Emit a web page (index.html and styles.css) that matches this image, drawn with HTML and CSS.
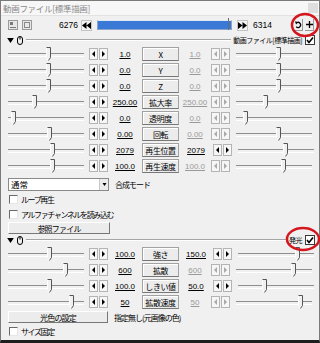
FILE: index.html
```html
<!DOCTYPE html>
<html lang="ja">
  <head>
    <meta charset="UTF-8" />
    <title>動画ファイル[標準描画]</title>
    <link rel="stylesheet" href="styles.css">
  </head>
  <body>
    <svg width="0" height="0" style="position:absolute">
      <symbol id="thumb" viewBox="0 0 5 14">
        <path d="M0.5 13V0.5H4.5V10.5L2.5 13.5Z" fill="#f0f0f0" />
        <path d="M0.5 0.5V10.5L2.5 13.5" fill="none" stroke="#ffffff" />
        <path d="M0.5 0.5H4.5V10.5L2.5 13.5" fill="none" stroke="#555555" />
      </symbol>
      <symbol id="mouse" viewBox="0 0 6 9">
        <rect x="0.5" y="0.5" width="5" height="8" rx="2.5" fill="none" stroke="#000" />
        <path d="M3 0.5V3.5" stroke="#000" />
      </symbol>
      <symbol id="tri" viewBox="0 0 8 6">
        <path d="M0 0H8L4 6Z" fill="#000" />
      </symbol>
      <symbol id="check" viewBox="0 0 8 8">
        <path d="M1 4L3 6.5L7 1.5" fill="none" stroke="#000" stroke-width="1.6" />
      </symbol>
    </svg>

    <div class="win">
      <div class="title">
        <span>動画ファイル[標準描画]</span>
        <span class="close"></span>
      </div>

      <div class="toolbar">
        <span class="tb-icon">
          <svg width="10" height="10" viewBox="0 0 10 10">
            <rect x="0.5" y="0.5" width="9" height="9" fill="#e8e8e8" stroke="#9a9a9a" />
            <rect x="2" y="2" width="3" height="3" fill="#7a7a7a" />
            <path d="M2 7.5H8" stroke="#7a7a7a" />
          </svg>
        </span>
        <span class="tb-icon">
          <svg width="10" height="10" viewBox="0 0 10 10">
            <rect x="0.5" y="0.5" width="9" height="9" fill="#e8e8e8" stroke="#9a9a9a" />
            <rect x="2.5" y="2.5" width="5" height="5" fill="none" stroke="#8a8a8a" />
          </svg>
        </span>
        <span class="frame-l">6276</span>
        <span class="seek">
          <svg width="9" height="7" viewBox="0 0 9 7"><path d="M4.5 0V7L0 3.5Z M9 0V7L4.5 3.5Z" fill="#000" /></svg>
        </span>
        <div class="timeline"><span class="marker"></span></div>
        <span class="seek">
          <svg width="9" height="7" viewBox="0 0 9 7"><path d="M0 0V7L4.5 3.5Z M4.5 0V7L9 3.5Z" fill="#000" /></svg>
        </span>
        <span class="frame-r">6314</span>
        <span class="tb-btn">
          <svg width="7" height="8" viewBox="0 0 7 8">
            <path d="M2 1.5A2.6 2.6 0 1 1 1.2 5.8" fill="none" stroke="#000" stroke-width="1.3" />
            <path d="M0 0.3L3.3 1.2L1 3.6Z" fill="#000" />
          </svg>
        </span>
        <span class="tb-btn">
          <svg width="7" height="7" viewBox="0 0 7 7"><path d="M3.5 0V7M0 3.5H7" stroke="#000" stroke-width="1.3" /></svg>
        </span>
      </div>

      <div class="hdr">
        <svg class="tri" width="7" height="5"><use href="#tri" /></svg>
        <svg class="mouse" width="6" height="9"><use href="#mouse" /></svg>
        <span class="hdr-line"></span>
        <span class="hdr-label">動画ファイル[標準描画]</span>
        <span class="cbox checked"><svg width="8" height="8"><use href="#check" /></svg></span>
      </div>

      <div class="row">
        <div class="slider"><svg class="thumb" style="left:38px"><use href="#thumb" /></svg></div>
        <div class="arrows"><b class="al"></b><b class="ar"></b></div>
        <span class="val">1.0</span>
        <span class="name">X</span>
        <span class="val off">1.0</span>
        <div class="arrows off"><b class="al"></b><b class="ar"></b></div>
        <div class="slider right"><svg class="thumb" style="left:40px"><use href="#thumb" /></svg></div>
      </div>
      <div class="row">
        <div class="slider"><svg class="thumb" style="left:38px"><use href="#thumb" /></svg></div>
        <div class="arrows"><b class="al"></b><b class="ar"></b></div>
        <span class="val">0.0</span>
        <span class="name">Y</span>
        <span class="val off">0.0</span>
        <div class="arrows off"><b class="al"></b><b class="ar"></b></div>
        <div class="slider right"><svg class="thumb" style="left:40px"><use href="#thumb" /></svg></div>
      </div>
      <div class="row">
        <div class="slider"><svg class="thumb" style="left:38px"><use href="#thumb" /></svg></div>
        <div class="arrows"><b class="al"></b><b class="ar"></b></div>
        <span class="val">0.0</span>
        <span class="name">Z</span>
        <span class="val off">0.0</span>
        <div class="arrows off"><b class="al"></b><b class="ar"></b></div>
        <div class="slider right"><svg class="thumb" style="left:40px"><use href="#thumb" /></svg></div>
      </div>
      <div class="row">
        <div class="slider"><svg class="thumb" style="left:24px"><use href="#thumb" /></svg></div>
        <div class="arrows"><b class="al"></b><b class="ar"></b></div>
        <span class="val">250.00</span>
        <span class="name">拡大率</span>
        <span class="val off">250.00</span>
        <div class="arrows off"><b class="al"></b><b class="ar"></b></div>
        <div class="slider right"><svg class="thumb" style="left:27px"><use href="#thumb" /></svg></div>
      </div>
      <div class="row">
        <div class="slider"><svg class="thumb" style="left:3px"><use href="#thumb" /></svg></div>
        <div class="arrows"><b class="al"></b><b class="ar"></b></div>
        <span class="val">0.0</span>
        <span class="name">透明度</span>
        <span class="val off">0.0</span>
        <div class="arrows off"><b class="al"></b><b class="ar"></b></div>
        <div class="slider right"><svg class="thumb" style="left:7px"><use href="#thumb" /></svg></div>
      </div>
      <div class="row">
        <div class="slider"><svg class="thumb" style="left:39px"><use href="#thumb" /></svg></div>
        <div class="arrows"><b class="al"></b><b class="ar"></b></div>
        <span class="val">0.00</span>
        <span class="name">回転</span>
        <span class="val off">0.00</span>
        <div class="arrows off"><b class="al"></b><b class="ar"></b></div>
        <div class="slider right"><svg class="thumb" style="left:40px"><use href="#thumb" /></svg></div>
      </div>
      <div class="row">
        <div class="slider"><svg class="thumb" style="left:42px"><use href="#thumb" /></svg></div>
        <div class="arrows"><b class="al"></b><b class="ar"></b></div>
        <span class="val">2079</span>
        <span class="name">再生位置</span>
        <span class="val">2079</span>
        <div class="arrows"><b class="al"></b><b class="ar"></b></div>
        <div class="slider right"><svg class="thumb" style="left:45px"><use href="#thumb" /></svg></div>
      </div>
      <div class="row">
        <div class="slider"><svg class="thumb" style="left:42px"><use href="#thumb" /></svg></div>
        <div class="arrows"><b class="al"></b><b class="ar"></b></div>
        <span class="val">100.0</span>
        <span class="name">再生速度</span>
        <span class="val off">100.0</span>
        <div class="arrows off"><b class="al"></b><b class="ar"></b></div>
        <div class="slider right"><svg class="thumb" style="left:45px"><use href="#thumb" /></svg></div>
      </div>

      <div class="select-row">
        <div class="select">
          <span>通常</span>
          <span class="drop"><svg width="5" height="3"><use href="#tri" /></svg></span>
        </div>
        <span class="note">合成モード</span>
      </div>

      <label class="check-row"><span class="cbox"></span>ループ再生</label>
      <label class="check-row"><span class="cbox"></span>アルファチャンネルを読み込む</label>

      <div class="btn-row">
        <span class="wide-btn ref">参照ファイル</span>
      </div>

      <div class="hdr">
        <svg class="tri" width="7" height="5"><use href="#tri" /></svg>
        <svg class="mouse" width="6" height="9"><use href="#mouse" /></svg>
        <span class="hdr-line"></span>
        <span class="hdr-label">発光</span>
        <span class="cbox checked"><svg width="8" height="8"><use href="#check" /></svg></span>
      </div>

      <div class="row">
        <div class="slider"><svg class="thumb" style="left:39px"><use href="#thumb" /></svg></div>
        <div class="arrows"><b class="al"></b><b class="ar"></b></div>
        <span class="val">100.0</span>
        <span class="name">強さ</span>
        <span class="val">150.0</span>
        <div class="arrows"><b class="al"></b><b class="ar"></b></div>
        <div class="slider right"><svg class="thumb" style="left:57px"><use href="#thumb" /></svg></div>
      </div>
      <div class="row">
        <div class="slider"><svg class="thumb" style="left:55px"><use href="#thumb" /></svg></div>
        <div class="arrows"><b class="al"></b><b class="ar"></b></div>
        <span class="val">600</span>
        <span class="name">拡散</span>
        <span class="val off">600</span>
        <div class="arrows off"><b class="al"></b><b class="ar"></b></div>
        <div class="slider right"><svg class="thumb" style="left:55px"><use href="#thumb" /></svg></div>
      </div>
      <div class="row">
        <div class="slider"><svg class="thumb" style="left:39px"><use href="#thumb" /></svg></div>
        <div class="arrows"><b class="al"></b><b class="ar"></b></div>
        <span class="val">100.0</span>
        <span class="name">しきい値</span>
        <span class="val">50.0</span>
        <div class="arrows"><b class="al"></b><b class="ar"></b></div>
        <div class="slider right"><svg class="thumb" style="left:24px"><use href="#thumb" /></svg></div>
      </div>
      <div class="row">
        <div class="slider"><svg class="thumb" style="left:61px"><use href="#thumb" /></svg></div>
        <div class="arrows"><b class="al"></b><b class="ar"></b></div>
        <span class="val">50</span>
        <span class="name">拡散速度</span>
        <span class="val off">50</span>
        <div class="arrows off"><b class="al"></b><b class="ar"></b></div>
        <div class="slider right"><svg class="thumb" style="left:62px"><use href="#thumb" /></svg></div>
      </div>

      <div class="btn-row color-row">
        <span class="wide-btn">光色の設定</span>
        <span class="note">指定無し(元画像の色)</span>
      </div>

      <label class="check-row last"><span class="cbox"></span>サイズ固定</label>

      <!-- red marks drawn over the screenshot -->
      <svg class="mark mark-top" width="30" height="26"><ellipse cx="15" cy="13" rx="13" ry="11" fill="none" stroke="#d4161f" stroke-width="2.5" /></svg>
      <svg class="mark mark-glow" width="36" height="26"><ellipse cx="18" cy="13" rx="16" ry="11" fill="none" stroke="#d4161f" stroke-width="2.5" /></svg>
    </div>
  </body>
</html>
```

FILE: styles.css
```css
* {
  margin: 0;
  padding: 0;
  box-sizing: border-box;
}
body {
  width: 320px;
  height: 343px;
  overflow: hidden;
  background: #f0f0f0;
  font-family: "Noto Sans CJK JP", sans-serif;
  font-size: 8.5px;
  color: #000;
}

.win {
  position: relative;
  width: 320px;
  height: 343px;
  border: 1px solid #7a7a7a;
  border-bottom: 3px solid #1e1e1e;
  background: #f0f0f0;
}

.title {
  height: 15px;
  display: flex;
  align-items: center;
  justify-content: space-between;
  padding: 0 1px 0 2px;
  background: #f7f7f7;
  color: #8a8a8a;
  letter-spacing: -0.3px;
  border-bottom: 1px solid #e2e2e2;
}
.close {
  width: 10px;
  height: 10px;
  background: #dedede;
}

/* frame bar */
.toolbar {
  height: 18px;
  display: flex;
  align-items: center;
  padding-left: 7px;
  font-family: "Liberation Sans", sans-serif;
  font-size: 8.5px;
}
.tb-icon {
  display: flex;
  margin-right: 4px;
}
.frame-l {
  width: 42px;
  text-align: right;
  margin-right: 3px;
}
.seek {
  width: 11px;
  height: 11px;
  display: flex;
  align-items: center;
  justify-content: center;
  background: #f4f4f4;
  border: 1px solid #c4c4c4;
}
.timeline {
  position: relative;
  width: 135px;
  height: 10px;
  margin: 0 5px;
  background: #3a79d6;
  border: 1px solid #8aa4cc;
  border-top-color: #dfe8f5;
}
.marker {
  position: absolute;
  left: 130px;
  top: -3px;
  width: 1px;
  height: 12px;
  background: #6a6a6a;
}
.frame-r {
  margin-left: 5px;
  flex: 1;
}
.tb-btn {
  width: 9px;
  height: 12px;
  display: flex;
  align-items: center;
  justify-content: center;
  border-right: 1px solid #9a9a9a;
  border-bottom: 1px solid #9a9a9a;
  margin-right: 2px;
}
.tb-btn:last-child {
  margin-right: 5px;
}

/* group header */
.hdr {
  height: 12px;
  display: flex;
  align-items: center;
  padding-left: 6px;
}
.tri {
  margin-right: 3px;
}
.mouse {
  margin-right: 3px;
}
.hdr-line {
  flex: 1;
  height: 2px;
  border-top: 1px solid #a5a5a5;
  border-bottom: 1px solid #ffffff;
}
.hdr-label {
  margin: 0 3px 0 2px;
  font-size: 7px;
  letter-spacing: -0.5px;
}
.cbox {
  width: 9px;
  height: 9px;
  background: #fff;
  border: 1px solid;
  border-color: #6a6a6a #e6e6e6 #e6e6e6 #6a6a6a;
  display: inline-flex;
  align-items: center;
  justify-content: center;
}
.cbox.checked {
  width: 10px;
  height: 10px;
  border: 1px solid #3a3a3a;
  margin-right: 4px;
}

/* parameter rows */
.row {
  height: 16px;
  display: flex;
  align-items: center;
  padding-left: 7px;
}
.slider {
  position: relative;
  width: 76px;
  height: 16px;
  margin-right: 5px;
}
.slider::before {
  content: "";
  position: absolute;
  left: 0;
  right: 0;
  top: 7px;
  height: 2px;
  border-top: 1px solid #8e8e8e;
  border-bottom: 1px solid #ffffff;
}
.slider.right {
  margin: 0 0 0 6px;
}
.thumb {
  position: absolute;
  top: 1px;
  width: 5px;
  height: 14px;
}
.arrows {
  width: 19px;
  height: 12px;
  display: flex;
  gap: 1px;
  color: #000;
}
.arrows.off {
  color: #a8a8a8;
}
.arrows b {
  flex: 1;
  display: flex;
  align-items: center;
  justify-content: center;
  background: #f6f6f6;
  border: 1px solid #b4b4b4;
}
.al::before,
.ar::before {
  content: "";
  border-top: 3px solid transparent;
  border-bottom: 3px solid transparent;
}
.al::before {
  border-right: 3px solid currentColor;
}
.ar::before {
  border-left: 3px solid currentColor;
}
.val {
  width: 34px;
  text-align: center;
  font-family: "Liberation Sans", sans-serif;
  font-size: 8px;
  text-decoration: underline;
}
.val.off {
  width: 32px;
  color: #9a9a9a;
}
.name {
  width: 37px;
  height: 14px;
  display: flex;
  align-items: center;
  justify-content: center;
  background: #ececec;
  border: 1px solid #a2a2a2;
  border-bottom-color: #777;
  box-shadow: inset 1px 1px #fff;
  font-size: 8px;
  letter-spacing: -0.4px;
}

/* misc controls */
.select-row {
  height: 16px;
  margin-top: 2px;
  display: flex;
  align-items: center;
  padding-left: 7px;
}
.select {
  width: 101px;
  height: 13px;
  display: flex;
  align-items: center;
  justify-content: space-between;
  padding-left: 2px;
  background: #fff;
  border: 1px solid #8a8a8a;
}
.drop {
  width: 9px;
  height: 11px;
  display: flex;
  align-items: center;
  justify-content: center;
  background: #ececec;
  border-left: 1px solid #c8c8c8;
}
.note {
  margin-left: 6px;
  font-size: 8px;
  letter-spacing: -1px;
}
.check-row {
  height: 15px;
  display: flex;
  align-items: center;
  gap: 3px;
  padding-left: 8px;
  font-size: 8px;
  letter-spacing: -1.4px;
}
.btn-row {
  height: 12px;
  display: flex;
  align-items: center;
  padding-left: 7px;
}
.wide-btn {
  width: 100px;
  height: 12px;
  display: flex;
  align-items: center;
  justify-content: center;
  background: #ececec;
  border: 1px solid;
  border-color: #fff #777 #777 #fff;
  font-size: 8px;
  letter-spacing: -0.8px;
}
.wide-btn.ref {
  width: 102px;
}
.color-row {
  height: 14px;
}
.check-row.last {
  height: 15px;
}

.mark {
  position: absolute;
}
.mark-top {
  left: 289px;
  top: 11px;
}
.mark-glow {
  left: 284px;
  top: 225px;
}
```
